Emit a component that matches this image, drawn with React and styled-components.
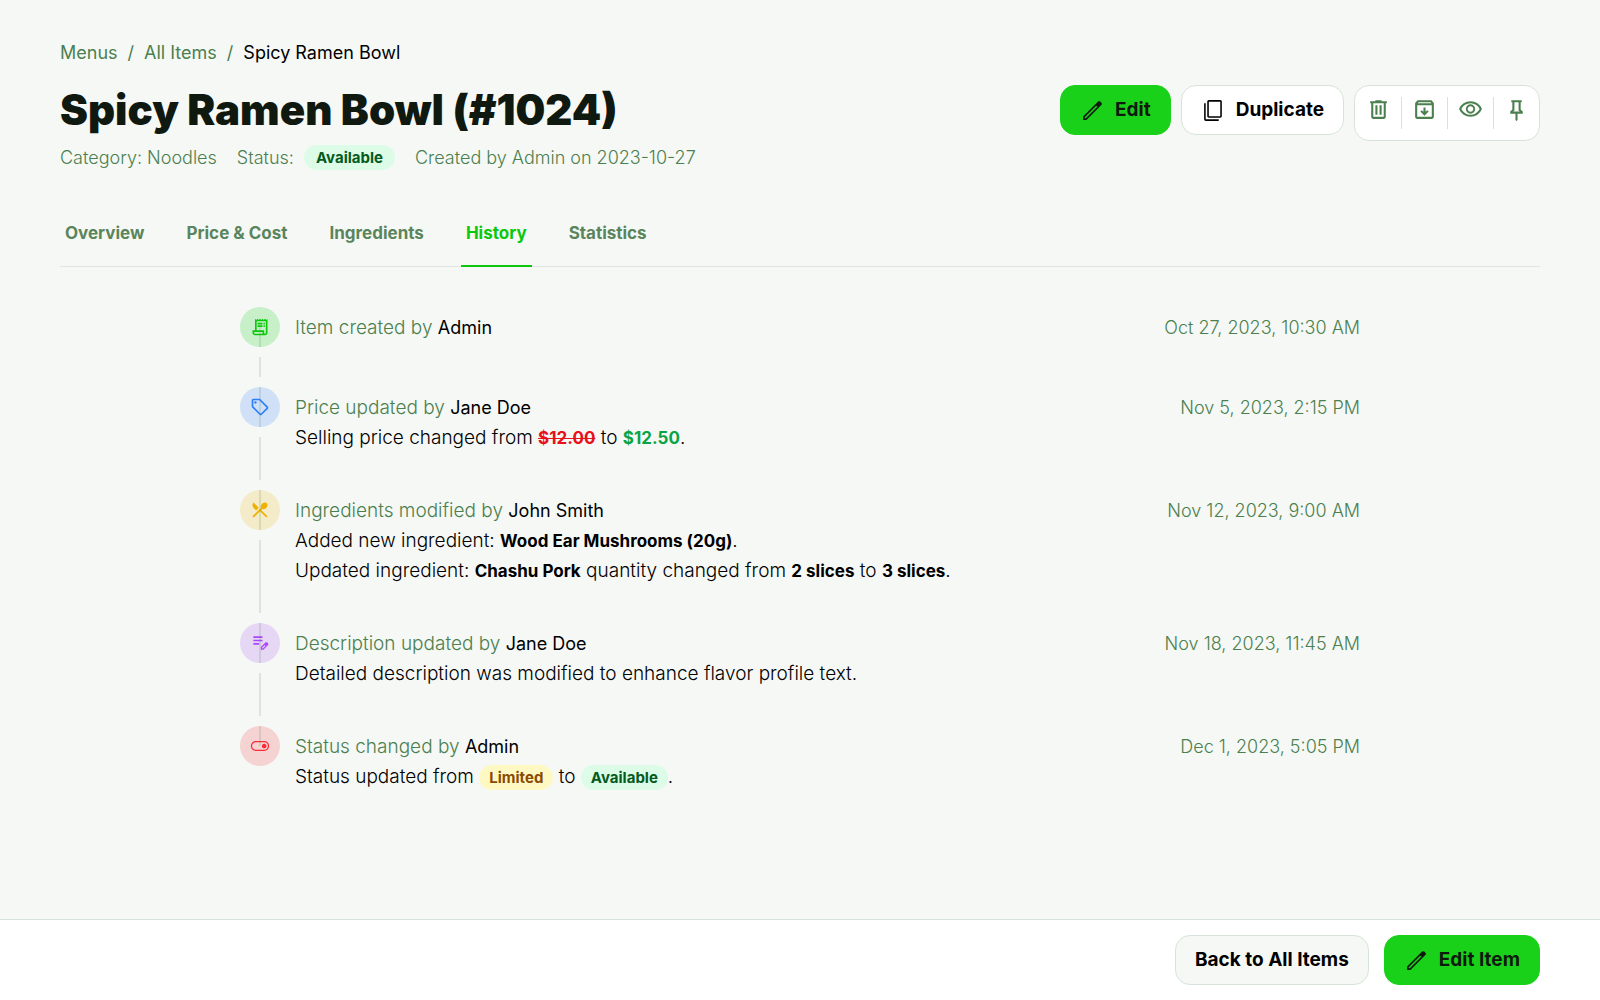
import React from 'react';
import styled, { createGlobalStyle, css } from 'styled-components';

const GlobalStyle = createGlobalStyle`
  *, *::before, *::after { box-sizing: border-box; }
  body {
    margin: 0;
    background: #f6f8f6;
    color: #000;
    font-family: Inter, "Noto Sans", sans-serif;
    font-size: 18px;
    line-height: 30px;
  }
  h1, p, ol, ul { margin: 0; padding: 0; }
  ol, ul { list-style: none; }
  a { color: inherit; text-decoration: none; }
  button { font: inherit; cursor: pointer; }
`;

const Page = styled.div`
  min-height: 100vh;
  display: flex;
  flex-direction: column;
`;

const Main = styled.main`
  flex: 1;
  padding: 40px 60px;
`;

const Breadcrumbs = styled.ol`
  display: flex;
  flex-wrap: wrap;
  gap: 10px;
  line-height: 26px;
  color: #4b804e;
`;

const Current = styled.span`
  color: #000;
`;

const Header = styled.header`
  display: flex;
  flex-wrap: wrap;
  justify-content: space-between;
  align-items: flex-start;
  gap: 20px;
  padding-top: 19px;
`;

const Title = styled.h1`
  font-size: 42px;
  line-height: 50px;
  font-weight: 900;
  color: #101910;
`;

const Meta = styled.div`
  display: flex;
  flex-wrap: wrap;
  align-items: center;
  gap: 20px;
  padding-top: 10px;
  line-height: 25px;
  font-weight: 300;
  color: #4b804e;
`;

const StatusLine = styled.span`
  display: flex;
  gap: 10px;
`;

const badgeTones = {
  green: css`background: #dcfce7; color: #045a20;`,
  yellow: css`background: #fef9c2; color: #894b00;`,
};

const Badge = styled.span`
  display: inline-block;
  padding: 0 ${(p) => (p.$wide ? '12px' : '10px')};
  border-radius: 13px;
  font-size: 15px;
  line-height: 25px;
  font-weight: 700;
  ${(p) => badgeTones[p.$tone]}
`;

const Actions = styled.div`
  display: flex;
  align-items: flex-start;
  gap: 10px;
`;

const Button = styled.button`
  display: flex;
  align-items: center;
  justify-content: center;
  gap: 10px;
  height: 50px;
  padding: 0 19px;
  border: 1px solid ${(p) => (p.$primary ? '#19d119' : '#d7e3d8')};
  border-radius: 15px;
  background: ${(p) => (p.$primary ? '#19d119' : p.$muted ? '#f6f8f6' : '#fff')};
  color: ${(p) => (p.$primary ? '#101910' : '#000')};
  font-size: 19px;
  font-weight: 700;
`;

const IconGroup = styled.div`
  display: flex;
  align-items: center;
  height: 56px;
  border: 1px solid #d7e3d8;
  border-radius: 15px;
  background: #fff;
`;

const IconButton = styled.button`
  display: flex;
  justify-content: center;
  width: 46px;
  height: 32px;
  padding: 0;
  border: 0;
  background: none;
  color: #4b804e;
  & + & { border-left: 1px solid #d7e3d8; }
`;

const Tabs = styled.nav`
  display: flex;
  gap: 32px;
  margin-top: 28px;
  border-bottom: 1px solid #dfe6df;
`;

const Tab = styled.button`
  padding: 20px 5px 17px;
  margin-bottom: -1px;
  border: 0;
  border-bottom: 2px solid ${(p) => (p['aria-current'] ? '#0bc80b' : 'transparent')};
  background: none;
  color: ${(p) => (p['aria-current'] ? '#0bc80b' : '#5a855c')};
  font-size: 17px;
  font-weight: 700;
`;

const Timeline = styled.ol`
  width: 100%;
  max-width: 1120px;
  margin: 40px auto 0;
`;

const Entry = styled.li`
  display: flex;
  gap: 15px;
  position: relative;
  padding-bottom: ${(p) => (p.$last ? '0' : '37px')};
`;

const Rail = styled.div`
  display: flex;
  flex-direction: column;
  align-items: center;
  width: 40px;
  padding-bottom: 3px;
`;

const markTones = {
  green: css`background: #c7efc8; color: #0bc80b;`,
  blue: css`background: #d0e0f6; color: #2b7fff;`,
  yellow: css`background: #f4ebc8; color: #efb100;`,
  purple: css`background: #e6d7f5; color: #ad46ff;`,
  red: css`background: #f5d3d2; color: #fb2c36;`,
};

const Mark = styled.span`
  display: flex;
  align-items: center;
  justify-content: center;
  width: 40px;
  height: 40px;
  border-radius: 50%;
  ${(p) => markTones[p.$tone]}
`;

const Stem = styled.span`
  position: absolute;
  left: 19px;
  width: 2px;
  background: #4b804e29;
  top: ${(p) => (p.$part === 'gap' ? '50px' : p.$part === 'upper' ? '0' : '20px')};
  bottom: ${(p) => (p.$part === 'gap' ? '10px' : 'auto')};
  height: ${(p) => (p.$part === 'gap' ? 'auto' : '20px')};
`;

const Body = styled.div`
  flex: 1;
  padding-top: 6px;
`;

const Heading = styled.div`
  display: flex;
  justify-content: space-between;
  gap: 20px;
  font-size: 19px;
  font-weight: 300;
  color: #4b804e;
  strong { font-size: 18px; font-weight: 400; color: #000; }
`;

const When = styled.time`
  font-size: 18px;
`;

const Detail = styled.p`
  font-size: 19px;
  font-weight: 300;
  strong, del, ins { font-size: 17px; font-weight: 700; }
`;

const OldPrice = styled.del`
  color: #e7101b;
`;

const NewPrice = styled.ins`
  text-decoration: none;
  color: #0ba444;
`;

const Footer = styled.footer`
  position: sticky;
  bottom: 0;
  display: flex;
  justify-content: flex-end;
  gap: 15px;
  padding: 15px 60px;
  border-top: 1px solid #d7e3d8;
  background: #fff;
`;

const icons = {
  edit: 'M180-180h44l443-443-44-44-443 443v44Zm-60 60v-128l575-574q8-8 19-12.5t23-4.5q11 0 22 4.5t20 12.5l44 44q9 9 13 20t4 22q0 11-4.5 22.5T818-694L248-120H120Zm659-617-41-41 41 41Zm-134 92-22-22 44 44-22-22Z',
  copy: 'M300-200q-24 0-42-18t-18-42v-560q0-24 18-42t42-18h440q24 0 42 18t18 42v560q0 24-18 42t-42 18H300Zm0-60h440v-560H300v560ZM180-80q-24 0-42-18t-18-42v-620h60v620h500v60H180Z',
  trash: 'M280-120q-33 0-56.500-23.500T200-200v-520h-40v-80h200v-40h240v40h200v80h-40v520q0 33-23.500 56.500T680-120H280Zm400-600H280v520h400v-520ZM360-280h80v-360h-80v360Zm160 0h80v-360h-80v360Z',
  archive: 'm480-240 160-160-56-56-64 64v-168h-80v168l-64-64-56 56 160 160ZM200-640v440h560v-440H200Zm0 520q-33 0-56.500-23.500T120-200v-499q0-14 4.500-27t13.500-24l50-61q11-14 27.500-21.500T250-840h460q18 0 34.500 7.500T772-811l50 61q9 11 13.500 24t4.500 27v499q0 33-23.500 56.500T760-120H200Zm16-600h528l-34-40H250l-34 40Z',
  eye: 'M480-320q75 0 127.500-52.500T660-500q0-75-52.500-127.500T480-680q-75 0-127.500 52.500T300-500q0 75 52.500 127.500T480-320Zm0-72q-45 0-76.500-31.500T372-500q0-45 31.500-76.500T480-608q45 0 76.500 31.500T588-500q0 45-31.500 76.500T480-392Zm0 192q-146 0-266-81.500T40-500q54-137 174-218.500T480-800q146 0 266 81.500T920-500q-54 137-174 218.500T480-200Zm0-80q113 0 207.500-59.500T832-500q-50-101-144.500-160.500T480-720q-113 0-207.500 59.500T128-500q50 101 144.500 160.500T480-280Z',
  pin: 'm640-480 80 80v80H520v240l-40 40-40-40v-240H240v-80l80-80v-280h-40v-80h400v80h-40v280Zm-286 80h252l-46-46v-314H400v314l-46 46Z',
  receipt: 'M240-80q-50 0-85-35t-35-85v-120h120v-560l60 60 60-60 60 60 60-60 60 60 60-60 60 60 60-60 60 60 60-60v680q0 50-35 85t-85 35H240Zm480-80q17 0 28.500-11.500T760-200v-560H320v440h360v120q0 17 11.500 28.500T720-160ZM360-600v-80h240v80H360Zm0 120v-80h240v80H360Zm320-120q-17 0-28.500-11.500T640-640q0-17 11.500-28.500T680-680q17 0 28.500 11.500T720-640q0 17-11.500 28.500T680-600Zm0 120q-17 0-28.500-11.500T640-520q0-17 11.500-28.500T680-560q17 0 28.500 11.500T720-520q0 17-11.500 28.500T680-480ZM240-160h360v-80H200v40q0 17 11.500 28.500T240-160Z',
  sell: 'M856-390 570-104q-12 12-27 18t-30 6q-15 0-30-6t-27-18L103-457q-11-11-17-25.500T80-513v-287q0-33 23.500-56.500T160-880h287q16 0 31 6.500t26 17.500l352 353q12 12 17.500 27t5.500 30q0 15-5.500 29.500T856-390ZM513-160l286-286-353-354H160v286l353 354ZM260-640q25 0 42.500-17.500T320-700q0-25-17.500-42.500T260-760q-25 0-42.500 17.500T200-700q0 25 17.500 42.500T260-640Z',
  menu: 'm175-120-56-56 410-410q-18-42-5-95t57-95q53-53 118-62t106 32q41 41 32 106t-62 118q-42 44-95 57t-95-5l-50 50 304 304-56 56-304-302-304 302Zm118-342L173-582q-54-54-54-129t54-129l248 250-128 128Z',
  note: 'M160-400v-80h280v80H160Zm0-160v-80h440v80H160Zm0-160v-80h440v80H160Zm360 560v-123l221-220q9-9 20-13t22-4q12 0 23 4.500t20 13.500l37 37q8 9 12.500 20t4.500 22q0 11-4 22.500T863-380L643-160H520Zm300-263-37-37 37 37ZM580-220h38l121-122-18-19-19-18-122 121v38Z',
  toggle: 'M280-240q-100 0-170-70T40-480q0-100 70-170t170-70h400q100 0 170 70t70 170q0 100-70 170t-170 70H280Zm0-60h400q75 0 127.500-52.500T860-480q0-75-52.500-127.500T680-660H280q-75 0-127.500 52.500T100-480q0 75 52.500 127.500T280-300Zm400-70q46 0 78-32t32-78q0-46-32-78t-78-32q-46 0-78 32t-32 78q0 46 32 78t78 32Z',
};

function Icon({ name, size = 25 }) {
  return (
    <svg width={size} height={size} viewBox="0 -960 960 960" fill="currentColor" aria-hidden="true">
      <path d={icons[name]} />
    </svg>
  );
}

const tabs = ['Overview', 'Price & Cost', 'Ingredients', 'History', 'Statistics'];

const tools = [
  ['trash', 'Delete'],
  ['archive', 'Archive'],
  ['eye', 'Preview'],
  ['pin', 'Pin'],
];

const events = [
  { icon: 'receipt', tone: 'green', text: 'Item created by', who: 'Admin', when: 'Oct 27, 2023, 10:30 AM' },
  {
    icon: 'sell', tone: 'blue', text: 'Price updated by', who: 'Jane Doe', when: 'Nov 5, 2023, 2:15 PM',
    details: [<>Selling price changed from <OldPrice>$12.00</OldPrice> to <NewPrice>$12.50</NewPrice>.</>],
  },
  {
    icon: 'menu', tone: 'yellow', text: 'Ingredients modified by', who: 'John Smith', when: 'Nov 12, 2023, 9:00 AM',
    details: [
      <>Added new ingredient: <strong>Wood Ear Mushrooms (20g)</strong>.</>,
      <>Updated ingredient: <strong>Chashu Pork</strong> quantity changed from <strong>2 slices</strong> to <strong>3 slices</strong>.</>,
    ],
  },
  {
    icon: 'note', tone: 'purple', text: 'Description updated by', who: 'Jane Doe', when: 'Nov 18, 2023, 11:45 AM',
    details: ['Detailed description was modified to enhance flavor profile text.'],
  },
  {
    icon: 'toggle', tone: 'red', text: 'Status changed by', who: 'Admin', when: 'Dec 1, 2023, 5:05 PM',
    details: [<>Status updated from <Badge $tone="yellow">Limited</Badge> to <Badge $tone="green">Available</Badge>.</>],
  },
];

export default function App() {
  return (
    <Page>
      <GlobalStyle />
      <Main>
        <nav aria-label="Breadcrumb">
          <Breadcrumbs>
            <li><a href="#menus">Menus</a></li>
            <li aria-hidden="true">/</li>
            <li><a href="#items">All Items</a></li>
            <li aria-hidden="true">/</li>
            <li><Current aria-current="page">Spicy Ramen Bowl</Current></li>
          </Breadcrumbs>
        </nav>
        <Header>
          <div>
            <Title>Spicy Ramen Bowl (#1024)</Title>
            <Meta>
              <span>Category: Noodles</span>
              <StatusLine>Status: <Badge $tone="green" $wide>Available</Badge></StatusLine>
              <span>Created by Admin on 2023-10-27</span>
            </Meta>
          </div>
          <Actions>
            <Button type="button" $primary><Icon name="edit" />Edit</Button>
            <Button type="button"><Icon name="copy" />Duplicate</Button>
            <IconGroup>
              {tools.map(([icon, label]) => (
                <IconButton key={icon} type="button" aria-label={label}><Icon name={icon} /></IconButton>
              ))}
            </IconGroup>
          </Actions>
        </Header>
        <Tabs aria-label="Item sections">
          {tabs.map((tab) => (
            <Tab key={tab} type="button" aria-current={tab === 'History' ? 'page' : undefined}>{tab}</Tab>
          ))}
        </Tabs>
        <Timeline>
          {events.map((event, index) => {
            const last = index === events.length - 1;
            return (
              <Entry key={event.when} $last={last}>
                <Rail>
                  <Mark $tone={event.tone}><Icon name={event.icon} size={20} /></Mark>
                  {index > 0 && <Stem $part="upper" />}
                  {!last && <Stem $part="lower" />}
                  {!last && <Stem $part="gap" />}
                </Rail>
                <Body>
                  <Heading>
                    <span>{event.text} <strong>{event.who}</strong></span>
                    <When>{event.when}</When>
                  </Heading>
                  {event.details?.map((detail, i) => <Detail key={i}>{detail}</Detail>)}
                </Body>
              </Entry>
            );
          })}
        </Timeline>
      </Main>
      <Footer>
        <Button type="button" $muted>Back to All Items</Button>
        <Button type="button" $primary><Icon name="edit" />Edit Item</Button>
      </Footer>
    </Page>
  );
}
